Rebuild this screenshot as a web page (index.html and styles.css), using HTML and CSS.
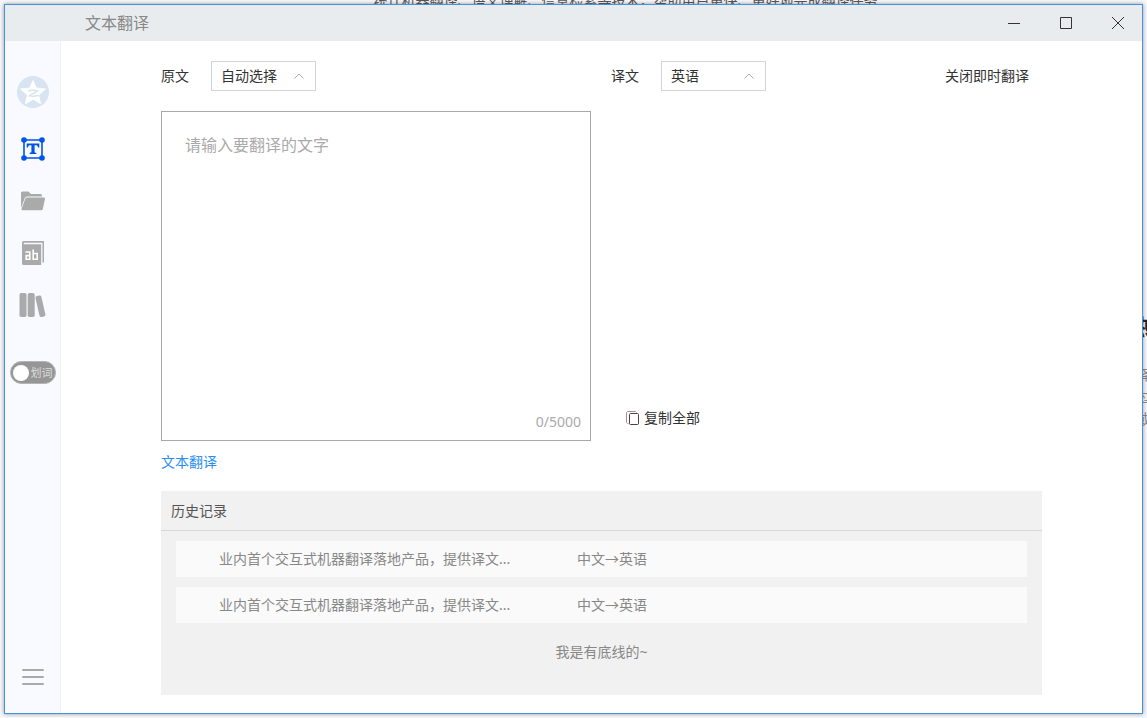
FILE: index.html
```html
<!DOCTYPE html>
<html lang="zh-CN">
<head>
<meta charset="utf-8">
<title>文本翻译</title>
<link rel="stylesheet" href="styles.css">
</head>
<body>
<div class="desktop" aria-hidden="true">
  <p class="desktop-line">统计机器翻译、语义理解、信息检索等技术，帮助用户更快、更好地完成翻译任务</p>
  <div class="desktop-card">
    <strong class="desktop-heading">热</strong>
    <span>译</span>
    <span>过</span>
    <span>或</span>
  </div>
</div>
<div class="window">
  <header class="titlebar">
    <h1 class="title">文本翻译</h1>
    <div class="window-buttons">
      <button class="window-button" aria-label="最小化"><svg width="14" height="14" viewBox="0 0 14 14"><path d="M1 7.500h12"/></svg></button>
      <button class="window-button" aria-label="最大化"><svg width="14" height="14" viewBox="0 0 14 14"><path d="M1.500 1.500h11v11h-11z"/></svg></button>
      <button class="window-button" aria-label="关闭"><svg width="14" height="14" viewBox="0 0 14 14"><path d="M1 1l12 12M13 1L1 13"/></svg></button>
    </div>
  </header>
  <div class="body">
    <nav class="sidebar">
      <button class="avatar" aria-label="账号">
        <svg width="32" height="32" viewBox="0 0 32 32"><circle cx="16" cy="16" r="16" fill="#d8e4f1"/><path d="M16 4.500l3.200 7.500 9.300 1-7 6 2 8.700L16 23.200l-7.500 4.500 2-8.700-7-6 9.300-1z" fill="#fff" stroke="#fff" stroke-linejoin="round"/><path d="M11 14.800c3.500-.7 6.500-.7 9.500 0L12 19.800c3 .6 6 .5 9.500-.3" fill="none" stroke="#d8e4f1" stroke-width="1.500" stroke-linejoin="round"/></svg>
      </button>
      <div class="tools">
        <button class="tool" aria-label="文本翻译">
          <svg width="26" height="26" viewBox="0 0 26 26"><path d="M4 4h18v18H4z" fill="none" stroke="#0055e6" stroke-width="1.600"/><g fill="#0055e6"><circle cx="4" cy="4" r="2.800"/><circle cx="22" cy="4" r="2.800"/><circle cx="4" cy="22" r="2.800"/><circle cx="22" cy="22" r="2.800"/><path d="M6.700 7.500h12.600v4h-1.200c-.3-1.700-1-2.300-2.500-2.300h-1v6.600c0 .9.500 1.100 1.800 1.200V18H9.600v-1c1.300-.1 1.800-.3 1.800-1.200V9.200h-1c-1.500 0-2.200.6-2.500 2.300H6.700z"/></g></svg>
        </button>
        <button class="tool" aria-label="文档翻译">
          <svg width="26" height="26" viewBox="0 0 26 26" fill="#aaa"><path d="M1 20V5Q1 3.500 2.500 3.500h6L11 6h9.500Q22 6 22 7.500v1H7Q5.300 8.500 4.800 10z"/><path d="M6.800 9.500H24q1.300 0 1 1.300l-2.200 10.300Q22.500 22.300 21.300 22.300H2.500q-1.300 0-1-1.300l3.800-10.200Q5.700 9.500 6.800 9.500z"/></svg>
        </button>
        <button class="tool" aria-label="词典">
          <svg width="26" height="26" viewBox="0 0 26 26"><path d="M3.500 1H24v21.500h-1.500V2.800H3.800v1.400h17.400V25H3.500Q2 25 2 23.500v-21Q2 1 3.500 1z" fill="#aaa"/><path d="M5.500 12h4.300v7.200H6.200v-3.600h3.600M13.200 9.500v9.700h4v-5.700h-4" fill="none" stroke="#fff" stroke-width="1.600"/></svg>
        </button>
        <button class="tool" aria-label="语料库">
          <svg width="28" height="26" viewBox="0 0 28 26" fill="#aaa"><rect x="0.500" y="1" width="7" height="24" rx="1.800"/><rect x="8.700" y="1" width="7" height="24" rx="1.800"/><rect x="18.500" y="3.500" width="6" height="21.500" rx="1.800" transform="rotate(-13 21.500 14.500)"/></svg>
        </button>
      </div>
      <label class="switch"><input class="switch-input" type="checkbox"><span class="switch-text">划词</span></label>
      <button class="menu" aria-label="菜单"><svg width="22" height="18" viewBox="0 0 22 18"><path d="M1 2h20M1 9h20M1 16h20" stroke="#aaa" stroke-width="2" stroke-linecap="round"/></svg></button>
    </nav>
    <main class="main">
      <div class="columns">
        <section class="column">
          <div class="language-row">
            <label class="language-label" for="source">原文</label>
            <div class="select-wrap">
              <select class="select" id="source"><option>自动选择</option><option>中文</option><option>英语</option></select>
              <svg class="chevron" width="10" height="6" viewBox="0 0 10 6"><path d="M.5 5.500L5 1l4.500 4.500"/></svg>
            </div>
          </div>
          <div class="source-box">
            <textarea class="source-text" aria-label="原文" placeholder="请输入要翻译的文字"></textarea>
            <div class="counter">0/5000</div>
          </div>
        </section>
        <section class="column">
          <div class="language-row">
            <label class="language-label" for="target">译文</label>
            <div class="select-wrap">
              <select class="select" id="target"><option>英语</option><option>中文</option></select>
              <svg class="chevron" width="10" height="6" viewBox="0 0 10 6"><path d="M.5 5.500L5 1l4.500 4.500"/></svg>
            </div>
            <button class="instant">关闭即时翻译</button>
          </div>
          <div class="result">
            <button class="copy"><svg width="14" height="14" viewBox="0 0 14 14" fill="none"><path d="M2.500 12.500h-1l-1-1v-10l1-1h8l1 1" stroke="#b08a80"/><rect x="3.500" y="2.500" width="9" height="11" rx="1" stroke="#444"/></svg>复制全部</button>
          </div>
        </section>
      </div>
      <a class="translate-link" href="#">文本翻译</a>
      <section class="history">
        <h2 class="history-title">历史记录</h2>
        <ul class="history-list">
          <li class="history-item"><span class="history-text">业内首个交互式机器翻译落地产品，提供译文...</span><span>中文→英语</span></li>
          <li class="history-item"><span class="history-text">业内首个交互式机器翻译落地产品，提供译文...</span><span>中文→英语</span></li>
        </ul>
        <p class="history-end">我是有底线的~</p>
      </section>
    </main>
  </div>
</div>
</body>
</html>
```
FILE: styles.css
```css
* { box-sizing: border-box; }
body {
  margin: 0;
  height: 100vh;
  padding: 4px;
  overflow: hidden;
  display: flex;
  background: #f7f8fb;
  color: #333;
  font: 14px/20px "Noto Sans", "Noto Sans CJK SC", sans-serif;
}
h1, h2, p, ul { margin: 0; padding: 0; font-weight: normal; }
button, select, textarea { font: inherit; color: inherit; }
button { border: 0; padding: 0; background: none; cursor: pointer; }
svg { display: block; }

.desktop { position: absolute; inset: 0; overflow: hidden; }
.desktop-line {
  position: absolute;
  top: -9px;
  left: 0;
  right: 0;
  padding-left: 104px;
  text-align: center;
  white-space: nowrap;
  color: #555;
}
.desktop-card {
  position: absolute;
  top: 310px;
  right: -4px;
  display: flex;
  flex-direction: column;
  align-items: flex-end;
  line-height: 22px;
  color: #888;
}
.desktop-heading { margin-bottom: 22px; line-height: 32px; font-size: 22px; color: #222; }

.window {
  position: relative;
  flex: 1;
  display: flex;
  flex-direction: column;
  border: 1px solid #4a90dc;
  background: #fff;
  box-shadow: 0 0 4px rgba(40, 50, 70, 0.5);
}
.titlebar {
  display: flex;
  justify-content: space-between;
  height: 36px;
  padding-left: 80px;
  background: #e8ecef;
}
.title { font-size: 16px; line-height: 36px; color: #888; }
.window-buttons { display: flex; }
.window-button { width: 52px; display: grid; place-items: center; }
.window-button:last-child { width: 50px; padding-left: 2px; }
.window-button svg { fill: none; stroke: #333; }

.body { flex: 1; display: flex; min-height: 0; }
.sidebar {
  width: 56px;
  padding: 35px 0 27px;
  display: flex;
  flex-direction: column;
  align-items: center;
  border-right: 1px solid #f0f1f4;
  background: #f8faff;
}
.tools {
  display: flex;
  flex-direction: column;
  align-items: center;
  gap: 26px;
  margin: 28px 0 43px;
}
.switch {
  width: 46px;
  height: 23px;
  padding: 0 2px;
  display: flex;
  align-items: center;
  gap: 2px;
  border: 1px solid #b4b4b4;
  border-radius: 12px;
  background: #969696;
  cursor: pointer;
}
.switch-input {
  appearance: none;
  flex: none;
  width: 16px;
  height: 16px;
  margin: 0;
  border-radius: 50%;
  background: #fff;
}
.switch-text { font-size: 11px; white-space: nowrap; color: #ddd; }
.menu { margin-top: auto; }

.main {
  flex: 1;
  min-width: 0;
  padding: 20px 100px 18px;
  display: flex;
  flex-direction: column;
}
.columns { display: grid; grid-template-columns: 1fr 1fr; gap: 21px; }
.column { display: flex; flex-direction: column; gap: 20px; }
.column + .column { margin-left: -1px; }
.language-row { display: flex; align-items: center; height: 30px; }
.language-label { width: 50px; }
.select-wrap { position: relative; width: 105px; }
.select {
  appearance: none;
  display: block;
  width: 100%;
  height: 30px;
  padding: 0 24px 0 9px;
  border: 1px solid #d5d5d5;
  border-radius: 0;
  background: #fff;
}
.chevron {
  position: absolute;
  top: 12px;
  right: 12px;
  fill: none;
  stroke: #aaa;
  pointer-events: none;
}
.instant { margin: 0 13px 0 auto; }
.source-box {
  height: 330px;
  display: flex;
  flex-direction: column;
  border: 1px solid #a9a9a9;
}
.source-text {
  flex: 1;
  padding: 21px 23px 0;
  border: 0;
  outline: 0;
  resize: none;
  background: none;
  font-size: 16px;
  line-height: 24px;
}
.source-text::placeholder { color: #aaa; }
.counter { padding: 0 9px 8px; text-align: right; color: #aaa; }
.result { flex: 1; display: flex; align-items: flex-end; padding: 0 15px 13px; }
.copy { display: flex; align-items: center; gap: 4px; }
.translate-link {
  align-self: flex-start;
  margin: 11px 0 19px;
  color: #2a90f0;
  text-decoration: none;
}
.history { flex: 1; background: #f1f1f1; color: #888; }
.history-title {
  padding: 1px 10px 0;
  border-bottom: 1px solid #d8d8d8;
  font-size: 14px;
  line-height: 38px;
  color: #555;
}
.history-list {
  display: flex;
  flex-direction: column;
  gap: 10px;
  padding: 10px 15px;
  list-style: none;
}
.history-item {
  display: flex;
  padding: 0 43px;
  background: #fafafa;
  line-height: 36px;
}
.history-text { width: 358px; }
.history-end { line-height: 38px; text-align: center; }
```
